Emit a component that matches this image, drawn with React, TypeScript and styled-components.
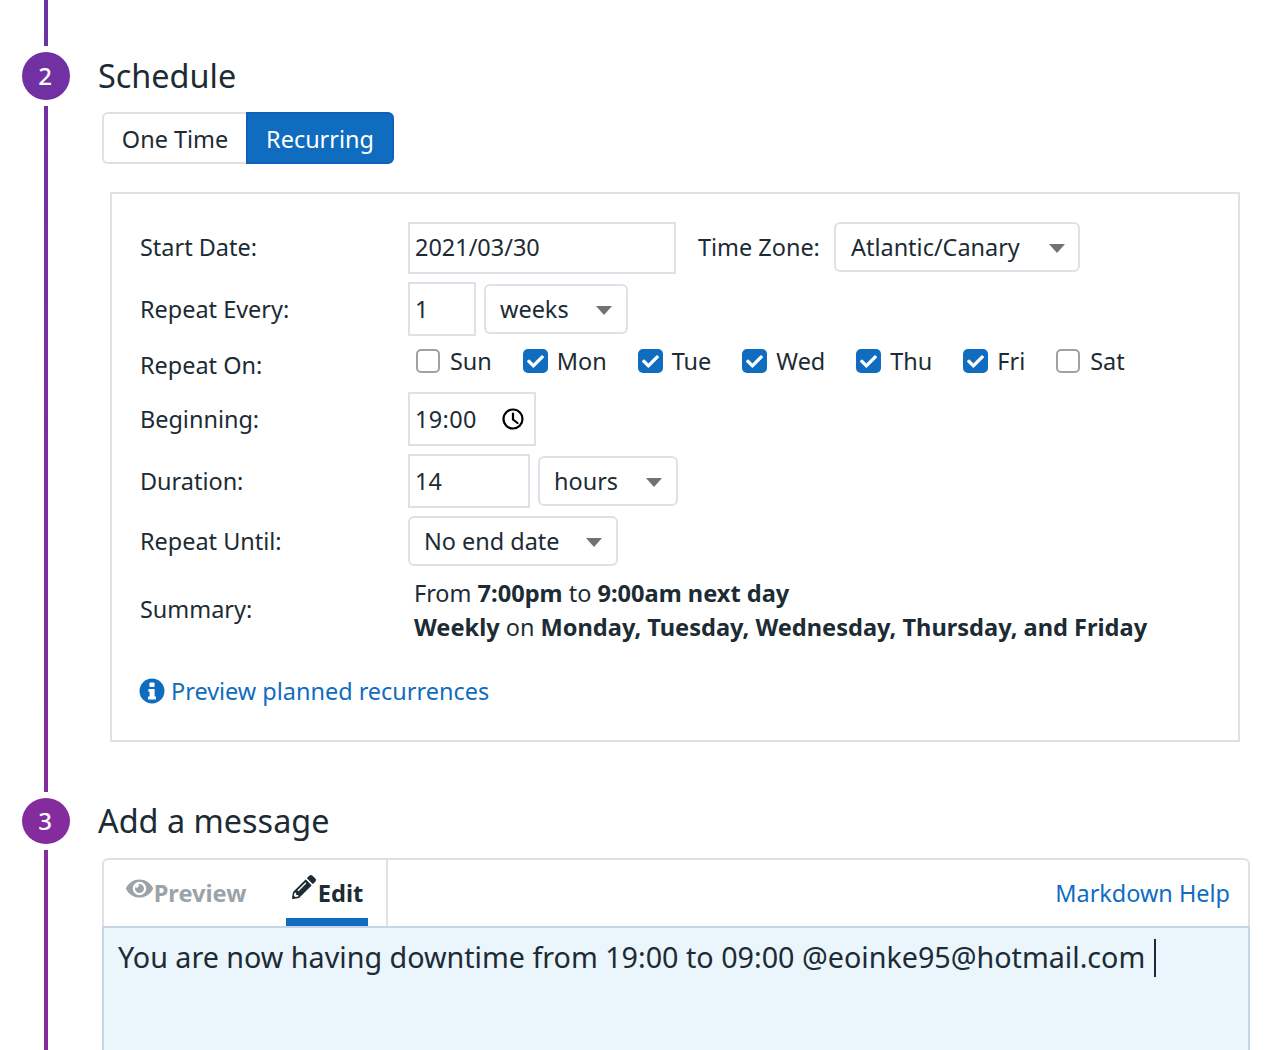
import React from 'react';
import styled, { createGlobalStyle } from 'styled-components';
import { FaCheck, FaEye, FaPencilAlt } from 'react-icons/fa';

const GlobalStyle = createGlobalStyle`
  html, body {
    margin: 0;
    padding: 0;
    background: #fff;
  }
  body {
    font-family: "Noto Sans", "Open Sans", sans-serif;
    font-size: 23.45px;
    color: #1c2b34;
  }
  b {
    font-size: 23.6px;
  }
`;

const Page = styled.div`
  width: 1266px;
  height: 1050px;
  overflow: hidden;
  display: flex;
  flex-direction: column;
  padding-left: 22px;
  box-sizing: border-box;
`;

const RailStub = styled.div`
  width: 4px;
  height: 46px;
  flex: none;
  margin: 0 0 6px 22px;
  background: #6d33a5;
`;

const Step = styled.section<{ $fill?: boolean }>`
  display: grid;
  grid-template-columns: 48px 1fr;
  column-gap: 28px;
  flex: ${(p) => (p.$fill ? 1 : 'none')};
`;

const RailColumn = styled.div`
  display: flex;
  flex-direction: column;
  align-items: center;
`;

const Circle = styled.div<{ $size: number; $color: string }>`
  box-sizing: border-box;
  width: 48px;
  height: ${(p) => p.$size}px;
  flex: none;
  padding: 0 2px 2px 0;
  border-radius: 50%;
  background: ${(p) => p.$color};
  color: #fff;
  font-size: 24px;
  font-weight: 500;
  display: flex;
  align-items: center;
  justify-content: center;
`;

const RailLine = styled.div`
  flex: 1;
  width: 4px;
  margin: 6px 0;
  background: linear-gradient(#7231a3, #822c9d);
`;

const RailEnd = styled(RailLine)`
  margin-bottom: 0;
  background: #842b9d;
`;

const Title = styled.h2<{ $top: number }>`
  margin: ${(p) => p.$top}px 0 0;
  font-size: 32.4px;
  font-weight: 400;
  line-height: 44px;
  color: #1c2b34;
`;

const StepBody = styled.div<{ $bottom?: number }>`
  display: flex;
  flex-direction: column;
  align-items: flex-start;
  padding-bottom: ${(p) => p.$bottom ?? 0}px;
`;

const Toggle = styled.div`
  display: flex;
  margin: 15px 0 0 4px;
  height: 52px;
`;

const ToggleButton = styled.div<{ $active?: boolean }>`
  display: flex;
  align-items: center;
  justify-content: center;
  box-sizing: border-box;
  width: ${(p) => (p.$active ? 148 : 144)}px;
  padding-top: 2px;
  border: 2px solid ${(p) => (p.$active ? '#0f5fbd' : '#e0e0e6')};
  border-radius: ${(p) => (p.$active ? '0 6px 6px 0' : '6px 0 0 6px')};
  border-right-width: ${(p) => (p.$active ? '2px' : '0')};
  background: ${(p) => (p.$active ? '#106cbf' : '#fff')};
  color: ${(p) => (p.$active ? '#fff' : '#1c2b34')};
`;

const Panel = styled.div`
  box-sizing: border-box;
  width: 1130px;
  height: 550px;
  margin: 28px 0 0 12px;
  padding: 28px 0 0 28px;
  border: 2px solid #e0e0e6;
  display: flex;
  flex-direction: column;
`;

const Row = styled.div<{ $height: number; $gap?: number }>`
  display: flex;
  align-items: center;
  height: ${(p) => p.$height}px;
  margin-bottom: ${(p) => p.$gap ?? 8}px;
`;

const Label = styled.div<{ $shift?: number }>`
  width: 268px;
  flex: none;
  margin-top: ${(p) => p.$shift ?? 0}px;
`;

const Input = styled.div<{ $width: number; $height?: number; $lift?: boolean }>`
  box-sizing: border-box;
  display: flex;
  align-items: center;
  justify-content: space-between;
  width: ${(p) => p.$width}px;
  height: ${(p) => p.$height ?? 54}px;
  padding: 0 10px ${(p) => (p.$lift ? 2 : 0)}px 5px;
  border: 2px solid #e0e0e6;
`;

const Select = styled.div<{ $width: number; $left?: number; $top?: boolean }>`
  box-sizing: border-box;
  display: flex;
  align-items: center;
  justify-content: space-between;
  align-self: ${(p) => (p.$top ? 'flex-start' : 'center')};
  width: ${(p) => p.$width}px;
  height: 50px;
  margin-left: ${(p) => p.$left ?? 0}px;
  padding: ${(p) => (p.$top ? '0 13px 0 15px' : '0 14px')};
  border: 2px solid #e0e0e6;
  border-radius: 6px;
`;

const Caret = styled.span`
  width: 0;
  height: 0;
  margin-top: 2px;
  border-left: 8px solid transparent;
  border-right: 8px solid transparent;
  border-top: 9px solid #6e7378;
`;

const ZoneLabel = styled.div`
  width: 136px;
  margin: -2px 0 0 22px;
`;

const TimeValue = styled.span`
  letter-spacing: 0.4px;
`;

const Days = styled.div`
  display: flex;
  gap: 31px;
  padding-left: 8px;
  margin-top: -6px;
`;

const Day = styled.div<{ $on: boolean }>`
  display: flex;
  align-items: center;
  gap: ${(p) => (p.$on ? 9 : 10)}px;
  line-height: 28px;
`;

const Box = styled.span<{ $on: boolean }>`
  box-sizing: border-box;
  width: ${(p) => (p.$on ? 25 : 24)}px;
  height: 24px;
  border-radius: 5px;
  display: flex;
  align-items: center;
  justify-content: center;
  color: #fff;
  font-size: 17px;
  background: ${(p) => (p.$on ? '#106cbf' : '#fff')};
  border: ${(p) => (p.$on ? 'none' : '2px solid #9ba2a8')};
`;

const Summary = styled.div`
  padding-left: 6px;
  line-height: 34px;
`;

const PreviewLink = styled.a`
  display: flex;
  align-items: center;
  gap: 6px;
  color: #106cbf;
  margin: 29px 0 0 -1px;
  text-decoration: none;
`;

const Editor = styled.div`
  box-sizing: border-box;
  width: 1148px;
  height: 300px;
  margin: 16px 0 0 4px;
  border: 2px solid #e0e0e6;
  border-bottom: none;
  border-radius: 6px 6px 0 0;
  display: flex;
  flex-direction: column;
`;

const Tabs = styled.div`
  display: flex;
  align-items: stretch;
  justify-content: space-between;
  height: 66px;
  flex: none;
`;

const TabGroup = styled.div`
  display: flex;
  gap: 18px;
  width: 284px;
  box-sizing: border-box;
  border-right: 2px solid #e0e0e6;
`;

const Tab = styled.div<{ $active?: boolean; $width: number }>`
  box-sizing: border-box;
  width: ${(p) => p.$width}px;
  display: flex;
  align-items: flex-start;
  justify-content: center;
  gap: ${(p) => (p.$active ? 2 : 1)}px;
  font-weight: 700;
  padding: 15px 0 0 ${(p) => (p.$active ? 1 : 0)}px;
  color: ${(p) => (p.$active ? '#1c2b34' : '#9aa3a9')};
  border-bottom: 8px solid ${(p) => (p.$active ? '#106cbf' : 'transparent')};
`;

const TabText = styled.span`
  font-size: 23.6px;
  line-height: 33px;
  margin-top: 2px;
`;

const HelpLink = styled.a`
  align-self: center;
  margin-right: 18px;
  color: #106cbf;
  text-decoration: none;
`;

const TextArea = styled.div`
  flex: 1;
  margin: 0 -2px;
  padding: 7px 14px;
  background: #eaf5fc;
  border: 2px solid #c9d5e3;
  border-bottom: none;
  font-size: 28.7px;
  line-height: 44px;
  white-space: nowrap;
`;

const Cursor = styled.span`
  display: inline-block;
  width: 2px;
  height: 38px;
  margin-left: 9px;
  vertical-align: -9px;
  background: #1c2b34;
`;

const ClockIcon = () => (
  <svg width="22" height="22" viewBox="0 0 22 22" fill="none" stroke="#000" strokeWidth="2.2" strokeLinecap="round">
    <circle cx="11" cy="11" r="9.5" />
    <path d="M11 5.5V11.5L15.5 15" />
  </svg>
);

const InfoIcon = () => (
  <svg width="26" height="26" viewBox="0 0 26 26">
    <circle cx="13" cy="13" r="12.5" fill="#106cbf" />
    <rect x="10.4" y="4.6" width="5.2" height="4.4" rx="1" fill="#fff" />
    <path d="M9.4 11H15.6V18.4H17V21.4H9V18.4H10.6V13.8H9.4Z" fill="#fff" />
  </svg>
);

const days: [string, boolean][] = [
  ['Sun', false],
  ['Mon', true],
  ['Tue', true],
  ['Wed', true],
  ['Thu', true],
  ['Fri', true],
  ['Sat', false],
];

const App: React.FC = () => {
  return (
    <Page>
      <GlobalStyle />
      <RailStub />
      <Step>
        <RailColumn>
          <Circle $size={48} $color="#7231a3">2</Circle>
          <RailLine />
        </RailColumn>
        <StepBody $bottom={56}>
          <Title $top={1}>Schedule</Title>
          <Toggle>
            <ToggleButton>One Time</ToggleButton>
            <ToggleButton $active>Recurring</ToggleButton>
          </Toggle>
          <Panel>
            <Row $height={52}>
              <Label $shift={-2}>Start Date:</Label>
              <Input $width={268} $height={52} $lift>2021/03/30</Input>
              <ZoneLabel>Time Zone:</ZoneLabel>
              <Select $width={246} $top>
                Atlantic/Canary
                <Caret />
              </Select>
            </Row>
            <Row $height={54}>
              <Label>Repeat Every:</Label>
              <Input $width={68}>1</Input>
              <Select $width={144} $left={8}>
                weeks
                <Caret />
              </Select>
            </Row>
            <Row $height={40}>
              <Label $shift={2}>Repeat On:</Label>
              <Days>
                {days.map(([name, on]) => (
                  <Day key={name} $on={on}>
                    <Box $on={on}>{on && <FaCheck />}</Box>
                    {name}
                  </Day>
                ))}
              </Days>
            </Row>
            <Row $height={54}>
              <Label>Beginning:</Label>
              <Input $width={128}>
                <TimeValue>19:00</TimeValue>
                <ClockIcon />
              </Input>
            </Row>
            <Row $height={54}>
              <Label>Duration:</Label>
              <Input $width={122}>14</Input>
              <Select $width={140} $left={8}>
                hours
                <Caret />
              </Select>
            </Row>
            <Row $height={50}>
              <Label>Repeat Until:</Label>
              <Select $width={210}>
                No end date
                <Caret />
              </Select>
            </Row>
            <Row $height={72} $gap={0}>
              <Label $shift={-2}>Summary:</Label>
              <Summary>
                From <b>7:00pm</b> to <b>9:00am next day</b>
                <br />
                <b>Weekly</b> on <b>Monday, Tuesday, Wednesday, Thursday, and Friday</b>
              </Summary>
            </Row>
            <PreviewLink>
              <InfoIcon />
              Preview planned recurrences
            </PreviewLink>
          </Panel>
        </StepBody>
      </Step>
      <Step $fill>
        <RailColumn>
          <Circle $size={46} $color="#842b9d">3</Circle>
          <RailEnd />
        </RailColumn>
        <StepBody>
          <Title $top={0}>Add a message</Title>
          <Editor>
            <Tabs>
              <TabGroup>
                <Tab $width={164}>
                  <FaEye size={27} />
                  <TabText>Preview</TabText>
                </Tab>
                <Tab $active $width={82}>
                  <FaPencilAlt size={24} />
                  <TabText>Edit</TabText>
                </Tab>
              </TabGroup>
              <HelpLink>Markdown Help</HelpLink>
            </Tabs>
            <TextArea>
              You are now having downtime from 19:00 to 09:00 @eoinke95@hotmail.com
              <Cursor />
            </TextArea>
          </Editor>
        </StepBody>
      </Step>
    </Page>
  );
};

export default App;
